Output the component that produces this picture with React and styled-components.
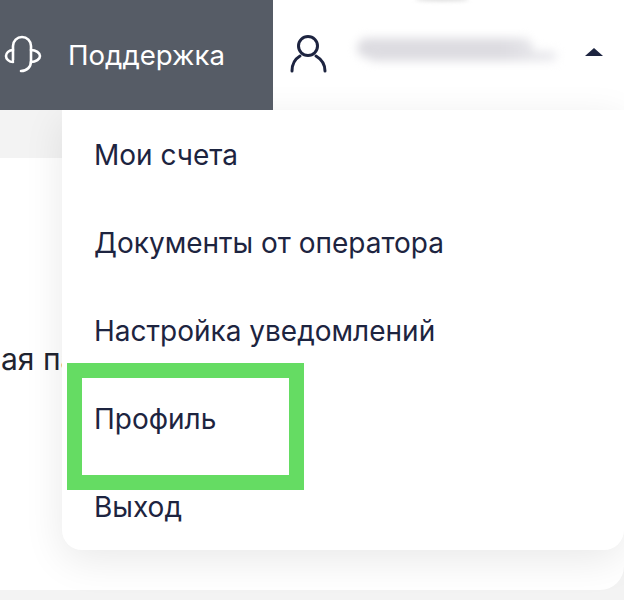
import React from 'react'
import styled, { createGlobalStyle } from 'styled-components'

const GlobalStyle = createGlobalStyle`
  html, body {
    margin: 0;
    padding: 0;
    background: #f3f3f3;
  }
  body {
    font-family: Inter, "Noto Sans", sans-serif;
  }
`

const Page = styled.div`
  position: relative;
  width: 624px;
  height: 600px;
  overflow: hidden;
`

const Header = styled.header`
  display: flex;
  height: 110px;
  background: #fff;
`

const Support = styled.div`
  position: relative;
  z-index: 3;
  display: flex;
  align-items: center;
  gap: 24px;
  width: 273px;
  padding-left: 4px;
  box-sizing: border-box;
  background: #565c66;
  color: #fff;
  font-size: 27.6px;
`

const UserBox = styled.div`
  position: relative;
  flex: 1;
  display: flex;
  align-items: center;
  padding: 0 21px 0 16px;
`

const UserName = styled.div`
  position: relative;
  flex: 1;
  height: 20px;
  margin: 0 52px 14px 28px;
  border-radius: 10px;
  background: linear-gradient(90deg, #dddce1 0%, #dddce1 82%, #e6e6ea 100%);
  filter: blur(5px);

  &::after {
    content: '';
    position: absolute;
    top: 13px;
    left: 12px;
    right: -24px;
    height: 10px;
    border-radius: 5px;
    background: linear-gradient(90deg, #dddce1 0%, #dddce1 70%, #ebebef 100%);
  }
`

const Smudge = styled.div`
  position: absolute;
  top: -3px;
  left: 142px;
  width: 54px;
  height: 4px;
  border-radius: 50%;
  background: #d6d6d6;
  filter: blur(2px);
`

const Caret = styled.div`
  width: 0;
  height: 0;
  margin-bottom: 6px;
  border-left: 9px solid transparent;
  border-right: 9px solid transparent;
  border-bottom: 8px solid #1d2440;
`

const Strip = styled.div`
  height: 48px;
`

const Card = styled.main`
  height: 432px;
  padding-top: 185px;
  box-sizing: border-box;
  background: #fff;
  border-radius: 0 0 24px 0;
  color: #1f2430;
  font-size: 30px;
  white-space: nowrap;
`

const CardText = styled.p`
  margin: 0;
  padding-left: 1px;
  line-height: 32px;
`

const Menu = styled.nav`
  position: absolute;
  z-index: 2;
  top: 110px;
  left: 62px;
  right: 0;
  height: 440px;
  padding-top: 1px;
  box-sizing: border-box;
  background: #fff;
  border-radius: 0 0 20px 20px;
  box-shadow: 0 10px 40px rgba(0, 0, 0, 0.09);
`

const MenuItem = styled.div`
  display: flex;
  align-items: center;
  height: 88px;
  padding-left: 32px;
  color: #1d2440;
  font-size: 28px;
`

const Highlight = styled.div`
  position: absolute;
  z-index: 4;
  top: 363px;
  left: 67px;
  width: 237px;
  height: 127px;
  box-sizing: border-box;
  border: 15px solid #65dc63;
`

function HeadsetIcon() {
  return (
    <svg width="40" height="44" viewBox="0 0 40 44" fill="none" stroke="#fff" strokeWidth="2.6" strokeLinecap="round" strokeLinejoin="round">
      <path d="M9 27V13C9 8 13 4 18 4C23 4 27 8 27 13V28C27 34 23 38 17 38" />
      <path d="M9 17C5 17 2 20 2 23C2 26 5 29 9 29" />
      <path d="M27 17C32 17 36 20 36 23C36 26 32 29 27 29" />
    </svg>
  )
}

function UserIcon() {
  return (
    <svg width="40" height="40" viewBox="0 0 40 40" fill="none" stroke="#1d2440" strokeWidth="3" strokeLinecap="round">
      <circle cx="19" cy="11" r="9.5" />
      <path d="M3 36C3 29 6 24 11 21" />
      <path d="M27 21C32 24 36 29 36 36" />
    </svg>
  )
}

const menuItems = ['Мои счета', 'Документы от оператора', 'Настройка уведомлений', 'Профиль', 'Выход']

export default function App() {
  return (
    <Page>
      <GlobalStyle />
      <Header>
        <Support>
          <HeadsetIcon />
          <span>Поддержка</span>
        </Support>
        <UserBox>
          <Smudge />
          <UserIcon />
          <UserName />
          <Caret />
        </UserBox>
      </Header>
      <Strip />
      <Card>
        <CardText>ая панель</CardText>
      </Card>
      <Menu>
        {menuItems.map(item => (
          <MenuItem key={item}>{item}</MenuItem>
        ))}
      </Menu>
      <Highlight />
    </Page>
  )
}
